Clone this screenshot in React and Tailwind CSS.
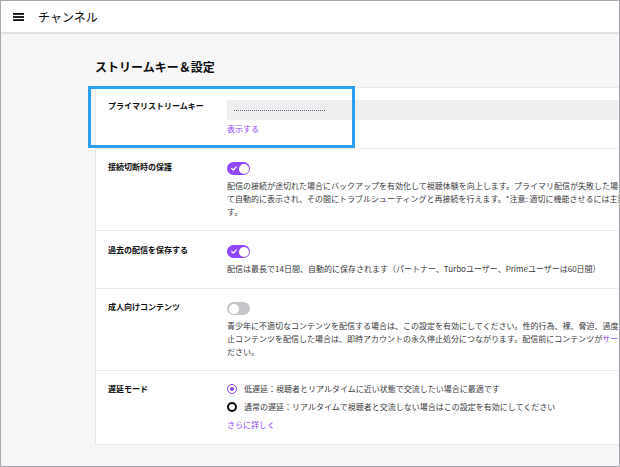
import React from 'react';

const jp = { fontFamily: '"Noto Sans CJK JP", "Noto Sans", sans-serif' };

function Toggle({ on }) {
  if (!on) {
    return (
      <div className="relative w-[23px] h-[13px] rounded-full bg-[#c6c6cc]">
        <div className="absolute left-[1.5px] top-[1.5px] w-[10px] h-[10px] rounded-full bg-white" />
      </div>
    );
  }
  return (
    <div className="relative w-[23px] h-[13px] rounded-full bg-[#9147ff]">
      <svg className="absolute left-[4px] top-[4px]" width="6" height="5" viewBox="0 0 6 5" fill="none">
        <path d="M0.7 2.5 L2.3 4 L5.3 0.9" stroke="white" strokeWidth="1.2" strokeLinecap="round" strokeLinejoin="round" />
      </svg>
      <div className="absolute right-[1.5px] top-[1.5px] w-[10px] h-[10px] rounded-full bg-white" />
    </div>
  );
}

function Radio({ checked, children }) {
  return (
    <div className="flex items-center h-[12px] gap-[7px]">
      {checked ? (
        <div className="w-[10px] h-[10px] rounded-full border-[1.5px] border-[#9147ff] flex items-center justify-center">
          <div className="w-[4px] h-[4px] rounded-full bg-[#9147ff]" />
        </div>
      ) : (
        <div className="w-[10px] h-[10px] rounded-full border-[2px] border-[#0e0e10]" />
      )}
      <span className="whitespace-nowrap">{children}</span>
    </div>
  );
}

function Row({ label, top = 'pt-[12px]', bottom = 'pb-[12px]', first, children }) {
  return (
    <div className={`flex ${first ? '' : 'border-t border-[#ebebee]'} ${top} ${bottom} pl-[12px]`}>
      <div className="w-[119px] shrink-0 text-[8px] leading-[12px] font-bold text-[#0e0e10]">{label}</div>
      <div className="flex-1 min-w-0">{children}</div>
    </div>
  );
}

function Desc({ lines }) {
  return (
    <div className="mt-[4px] text-[8px] leading-[13px] text-[#3a3a3d]">
      {lines.map((l, i) => (
        <div key={i} className="whitespace-nowrap">{l}</div>
      ))}
    </div>
  );
}

export default function App() {
  return (
    <div className="w-[620px] h-[467px] border border-[#a9a9ad] bg-[#f7f7f8] overflow-hidden flex flex-col" style={jp}>
      {/* Header */}
      <div className="h-[33px] shrink-0 bg-white border-b-2 border-[#e0e0e6] flex items-center pl-[12px]">
        <svg width="11" height="8" viewBox="0 0 11 8" className="mt-[1px]">
          <rect x="0" y="0" width="11" height="1.8" fill="#0e0e10" />
          <rect x="0" y="3.1" width="11" height="1.8" fill="#0e0e10" />
          <rect x="0" y="6.2" width="11" height="1.8" fill="#0e0e10" />
        </svg>
        <span className="ml-[14px] text-[12px] text-[#0e0e10]">チャンネル</span>
      </div>

      {/* Main */}
      <div className="flex-1 pl-[94px] pt-[25px]">
        <h2 className="text-[12px] leading-[16px] font-bold text-[#0e0e10] whitespace-nowrap">ストリームキー＆設定</h2>

        <div className="relative mt-[12px] w-[700px] bg-white border border-[#e8e8ec]">
          {/* highlight */}
          <div className="absolute left-[-8px] top-[-2px] w-[267px] h-[62px] border-[3px] border-[#2e9ff0] pointer-events-none" />

          <Row label="プライマリストリームキー" first top="pt-[12px]" bottom="pb-[13px]">
            <div className="h-[20px] bg-[#efeff1] flex items-center pl-[7px]">
              <div className="w-[91px] border-t border-dotted border-[#6a6a70]" />
            </div>
            <div className="mt-[3px] text-[8px] leading-[12px] text-[#9147ff]">表示する</div>
          </Row>

          <Row label="接続切断時の保護">
            <div className="mt-[1px]"><Toggle on /></div>
            <Desc
              lines={[
                '配信の接続が途切れた場合にバックアップを有効化して視聴体験を向上します。プライマリ配信が失敗した場合、バックアップ配信が視聴者に対し',
                'て自動的に表示され、その間にトラブルシューティングと再接続を行えます。*注意: 適切に機能させるには主要エンコーダーと同じ設定で送信する必要がありま',
                'す。',
              ]}
            />
          </Row>

          <Row label="過去の配信を保存する" top="pt-[13px]" bottom="pb-[13px]">
            <div className="mt-[1px]"><Toggle on /></div>
            <Desc lines={['配信は最長で14日間、自動的に保存されます（パートナー、Turboユーザー、Primeユーザーは60日間）']} />
          </Row>

          <Row label="成人向けコンテンツ">
            <div className="mt-[1px]"><Toggle on={false} /></div>
            <Desc
              lines={[
                '青少年に不適切なコンテンツを配信する場合は、この設定を有効にしてください。性的行為、裸、脅迫、過度な暴力など、当サービスで禁',
                <>
                  止コンテンツを配信した場合は、即時アカウントの永久停止処分につながります。配信前にコンテンツが
                  <span className="text-[#9147ff]">サービス規約</span>
                  に準拠していることを確認してく
                </>,
                'ださい。',
              ]}
            />
          </Row>

          <Row label="遅延モード" bottom="pb-[13px]">
            <div className="flex flex-col gap-[6px] text-[8px] text-[#3a3a3d]">
              <Radio checked>低遅延：視聴者とリアルタイムに近い状態で交流したい場合に最適です</Radio>
              <Radio>通常の遅延：リアルタイムで視聴者と交流しない場合はこの設定を有効にしてください</Radio>
              <div className="leading-[12px] text-[#9147ff]">さらに詳しく</div>
            </div>
          </Row>
        </div>
      </div>
    </div>
  );
}
